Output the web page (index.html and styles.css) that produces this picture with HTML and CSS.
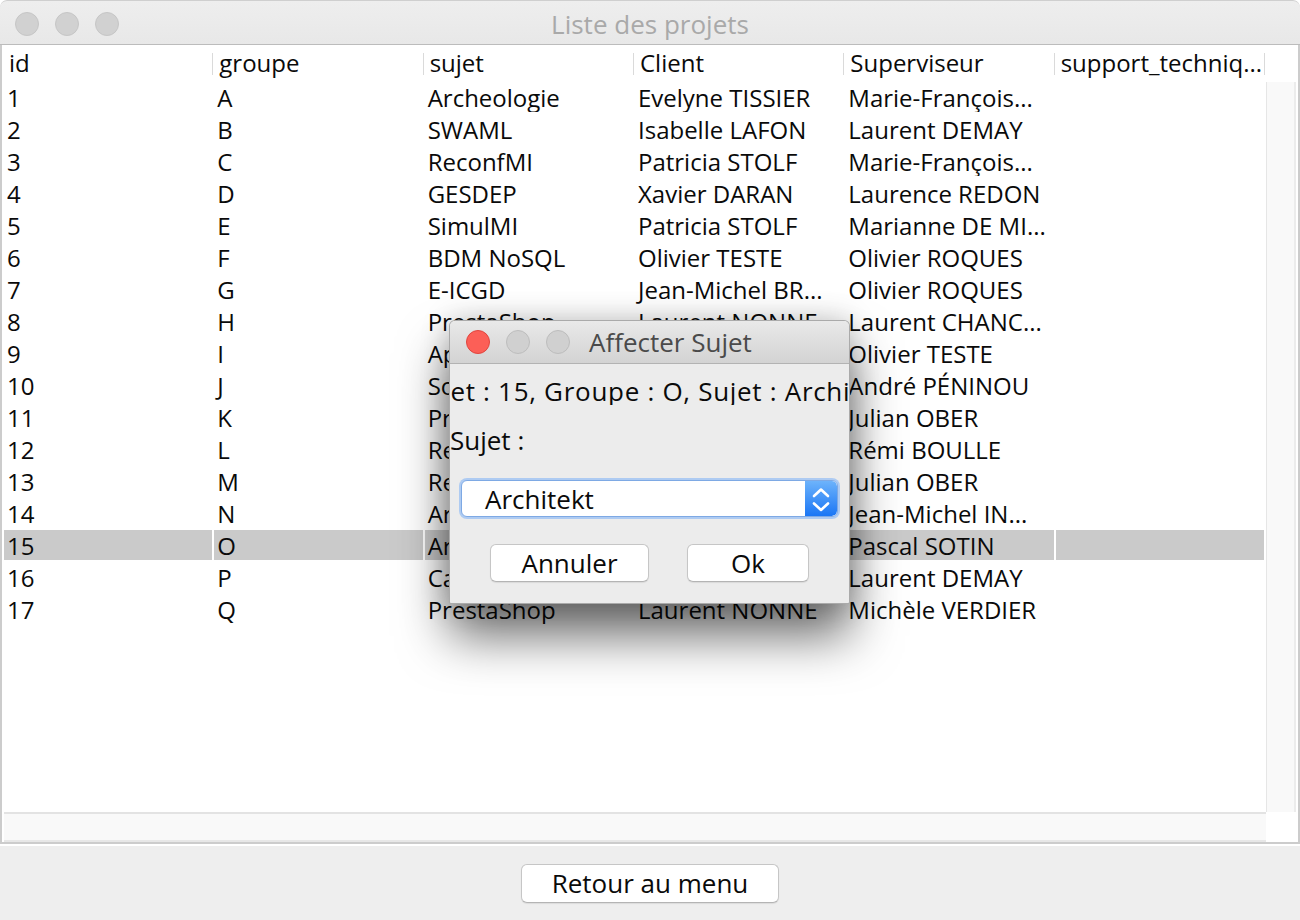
FILE: index.html
```html
<!DOCTYPE html>
<html lang="fr">
<head>
<meta charset="utf-8">
<title>Liste des projets</title>
<link rel="stylesheet" href="styles.css">
</head>
<body>
<div class="window">
  <div class="titlebar">
    <div class="lights">
      <span class="light"></span><span class="light"></span><span class="light"></span>
    </div>
    <div class="title">Liste des projets</div>
  </div>
  <div class="pane">
    <div class="thead">
      <div class="th">id</div>
      <div class="th">groupe</div>
      <div class="th">sujet</div>
      <div class="th">Client</div>
      <div class="th">Superviseur</div>
      <div class="th">support_techniq...</div>
      <div class="th-corner"></div>
    </div>
    <div class="tbody">
      <div class="tr"><div class="td">1</div><div class="td">A</div><div class="td">Archeologie</div><div class="td">Evelyne TISSIER</div><div class="td">Marie-François...</div><div class="td"></div></div>
      <div class="tr"><div class="td">2</div><div class="td">B</div><div class="td">SWAML</div><div class="td">Isabelle LAFON</div><div class="td">Laurent DEMAY</div><div class="td"></div></div>
      <div class="tr"><div class="td">3</div><div class="td">C</div><div class="td">ReconfMI</div><div class="td">Patricia STOLF</div><div class="td">Marie-François...</div><div class="td"></div></div>
      <div class="tr"><div class="td">4</div><div class="td">D</div><div class="td">GESDEP</div><div class="td">Xavier DARAN</div><div class="td">Laurence REDON</div><div class="td"></div></div>
      <div class="tr"><div class="td">5</div><div class="td">E</div><div class="td">SimulMI</div><div class="td">Patricia STOLF</div><div class="td">Marianne DE MI...</div><div class="td"></div></div>
      <div class="tr"><div class="td">6</div><div class="td">F</div><div class="td">BDM NoSQL</div><div class="td">Olivier TESTE</div><div class="td">Olivier ROQUES</div><div class="td"></div></div>
      <div class="tr"><div class="td">7</div><div class="td">G</div><div class="td">E-ICGD</div><div class="td">Jean-Michel BR...</div><div class="td">Olivier ROQUES</div><div class="td"></div></div>
      <div class="tr"><div class="td">8</div><div class="td">H</div><div class="td">PrestaShop</div><div class="td">Laurent NONNE</div><div class="td">Laurent CHANC...</div><div class="td"></div></div>
      <div class="tr"><div class="td">9</div><div class="td">I</div><div class="td">Apprentissage</div><div class="td">Thierry MILLAN</div><div class="td">Olivier TESTE</div><div class="td"></div></div>
      <div class="tr"><div class="td">10</div><div class="td">J</div><div class="td">SocialNet</div><div class="td">Yves DUTHEN</div><div class="td">André PÉNINOU</div><div class="td"></div></div>
      <div class="tr"><div class="td">11</div><div class="td">K</div><div class="td">ProjetWeb</div><div class="td">Sophie DUPUY</div><div class="td">Julian OBER</div><div class="td"></div></div>
      <div class="tr"><div class="td">12</div><div class="td">L</div><div class="td">ReconfMI</div><div class="td">Patricia STOLF</div><div class="td">Rémi BOULLE</div><div class="td"></div></div>
      <div class="tr"><div class="td">13</div><div class="td">M</div><div class="td">Reseaux</div><div class="td">Thierry MILLAN</div><div class="td">Julian OBER</div><div class="td"></div></div>
      <div class="tr"><div class="td">14</div><div class="td">N</div><div class="td">Archeologie</div><div class="td">Evelyne TISSIER</div><div class="td">Jean-Michel IN...</div><div class="td"></div></div>
      <div class="tr sel"><div class="td">15</div><div class="td">O</div><div class="td">Architekt</div><div class="td">Laurent NONNE</div><div class="td">Pascal SOTIN</div><div class="td"></div></div>
      <div class="tr"><div class="td">16</div><div class="td">P</div><div class="td">Cartographie</div><div class="td">Isabelle LAFON</div><div class="td">Laurent DEMAY</div><div class="td"></div></div>
      <div class="tr"><div class="td">17</div><div class="td">Q</div><div class="td">PrestaShop</div><div class="td">Laurent NONNE</div><div class="td">Michèle VERDIER</div><div class="td"></div></div>
    </div>
    <div class="vscroll"></div>
    <div class="hscroll"></div>
    <div class="corner"></div>
  </div>
  <div class="footer">
    <button class="btn btn-wide">Retour au menu</button>
  </div>
</div>

<div class="dialog">
  <div class="dlg-titlebar">
    <div class="lights">
      <span class="light close"></span><span class="light"></span><span class="light"></span>
    </div>
    <div class="dlg-title">Affecter Sujet</div>
  </div>
  <div class="dlg-body">
    <div class="dlg-info"><span>Projet : 15, Groupe : O, Sujet : Architekt</span></div>
    <div class="dlg-label">Sujet :</div>
    <div class="combo">
      <span class="combo-text">Architekt</span>
      <span class="combo-arrow">
        <svg width="32" height="37" viewBox="0 0 32 37">
          <path d="M9 15 L16 8.5 L23 15" fill="none" stroke="#fff" stroke-width="2.6" stroke-linecap="round" stroke-linejoin="round"/>
          <path d="M9 22.5 L16 29 L23 22.5" fill="none" stroke="#fff" stroke-width="2.6" stroke-linecap="round" stroke-linejoin="round"/>
        </svg>
      </span>
    </div>
    <div class="dlg-buttons">
      <button class="btn btn-cancel">Annuler</button>
      <button class="btn btn-ok">Ok</button>
    </div>
  </div>
</div>
</body>
</html>
```

FILE: styles.css
```css
* { box-sizing: border-box; }
html, body { margin: 0; padding: 0; }
body {
  width: 1300px;
  height: 920px;
  background: #ffffff;
  font-family: "Open Sans", "DejaVu Sans", sans-serif;
  color: #0a0a0a;
  overflow: hidden;
  position: relative;
}

.window {
  width: 1300px;
  height: 920px;
  display: flex;
  flex-direction: column;
  background: #eeeeee;
  border-radius: 7px 7px 0 0;
  overflow: hidden;
}

.titlebar {
  flex: none;
  height: 45px;
  padding-top: 2px;
  display: grid;
  align-items: center;
  background: linear-gradient(#eeeeee, #e8e8e8);
  border-top: 1px solid #cfcfcf;
  border-bottom: 1px solid #bcbcbc;
  border-radius: 7px 7px 0 0;
}
.titlebar > * { grid-area: 1 / 1; }
.lights {
  display: flex;
  gap: 16px;
  padding-left: 15px;
  align-items: center;
}
.light {
  width: 24px;
  height: 24px;
  border-radius: 50%;
  background: #d1d1d1;
  border: 1px solid #c6c6c6;
}
.title {
  justify-self: center;
  font-size: 26px;
  color: #a9a9a9;
  line-height: 30px;
}

.pane {
  flex: none;
  height: 799px;
  background: #ffffff;
  border: 2px solid #cccccc;
  border-top: none;
  padding: 1px 2px 0 2px;
  display: grid;
  grid-template-columns: 1262px 30px;
  grid-template-rows: 36px 730px 30px;
}

.thead {
  grid-column: 1 / 3;
  grid-row: 1;
  margin-left: -1px;
  display: grid;
  grid-template-columns: repeat(6, 210.333px) 1fr;
}
.th {
  font-size: 24px;
  line-height: 34px;
  padding-left: 6px;
  white-space: nowrap;
  overflow: hidden;
  background-image: linear-gradient(#dadada, #dadada);
  background-size: 1px 22px;
  background-repeat: no-repeat;
  background-position: right center;
}

.tbody {
  grid-column: 1;
  grid-row: 2;
  padding-right: 2px;
}
.tr {
  display: grid;
  grid-template-columns: repeat(6, 1fr);
  column-gap: 2px;
  height: 30px;
  margin-bottom: 2px;
}
.td {
  font-size: 24px;
  line-height: 28px;
  padding: 2px 0 0 3px;
  white-space: nowrap;
  overflow: hidden;
}
.tr.sel .td { background: #cacaca; }

.vscroll {
  grid-column: 2;
  grid-row: 2;
  background: #f9f9f9;
  border-left: 1px solid #e6e6e6;
  border-right: 2px solid #ececec;
}
.hscroll {
  grid-column: 1;
  grid-row: 3;
  background: #f9f9f9;
  border-top: 2px solid #e3e3e3;
  border-bottom: 2px solid #e7e7e7;
}
.corner { grid-column: 2; grid-row: 3; background: #ffffff; }

.footer {
  flex: 1;
  border-top: 2px solid #ffffff;
  background: #eeeeee;
  display: flex;
  justify-content: center;
  align-items: center;
}

.btn {
  font-family: "Open Sans", "DejaVu Sans", sans-serif;
  font-size: 26px;
  color: #0a0a0a;
  background: #ffffff;
  border: 1px solid #c6c6c6;
  border-bottom-color: #b4b4b4;
  border-radius: 6px;
  box-shadow: 0 1px 1px rgba(0,0,0,0.08);
  padding: 0;
  margin: 0;
  line-height: 1;
  display: flex;
  align-items: center;
  justify-content: center;
}
.btn-wide { width: 258px; height: 39px; }

/* Dialog overlay */
.dialog {
  position: absolute;
  left: 449px;
  top: 320px;
  width: 401px;
  height: 284px;
  background: #ececec;
  border: 1px solid rgba(0,0,0,0.28);
  border-radius: 6px 6px 2px 2px;
  box-shadow: 0 32px 50px rgba(0,0,0,0.58), 0 0 30px rgba(0,0,0,0.2);
  display: flex;
  flex-direction: column;
  overflow: hidden;
}
.dlg-titlebar {
  flex: none;
  height: 43px;
  display: flex;
  align-items: center;
  background: linear-gradient(#e9e9e9, #d3d3d3);
  border-bottom: 1px solid #b3b3b3;
}
.dlg-titlebar .lights { padding-left: 16px; }
.dlg-titlebar .light { background: #d0d0d0; border-color: #bdbdbd; }
.dlg-titlebar .light.close { background: #fc5f57; border-color: #e1453e; }
.dlg-title {
  margin-left: 19px;
  font-size: 26px;
  line-height: 30px;
  color: #4a4a4a;
}
.dlg-body {
  flex: 1;
  display: flex;
  flex-direction: column;
  padding-top: 13px;
}
.dlg-info {
  height: 28px;
  line-height: 28px;
  font-size: 26px;
  letter-spacing: 0.7px;
  display: flex;
  justify-content: center;
  white-space: nowrap;
  overflow: hidden;
}
.dlg-info span { flex: none; }
.dlg-label {
  margin-top: 22px;
  height: 28px;
  line-height: 26px;
  font-size: 26px;
}
.combo {
  margin-top: 25px;
  margin-left: 11px;
  width: 377px;
  height: 37px;
  background: #ffffff;
  border: 1px solid #7ea9e4;
  border-radius: 6px;
  box-shadow: 0 0 0 2px #aecbf2;
  display: flex;
  align-items: center;
  justify-content: space-between;
  overflow: hidden;
}
.combo-text {
  padding-left: 23px;
  font-size: 26px;
  line-height: 30px;
}
.combo-arrow {
  width: 32px;
  height: 35px;
  background: linear-gradient(#6db3fb, #1a76f5);
  border-radius: 0 5px 5px 0;
  display: flex;
}
.dlg-buttons {
  margin-top: 27px;
  display: flex;
  justify-content: center;
  gap: 38px;
}
.btn-cancel { width: 159px; height: 38px; }
.btn-ok { width: 122px; height: 38px; }
```
